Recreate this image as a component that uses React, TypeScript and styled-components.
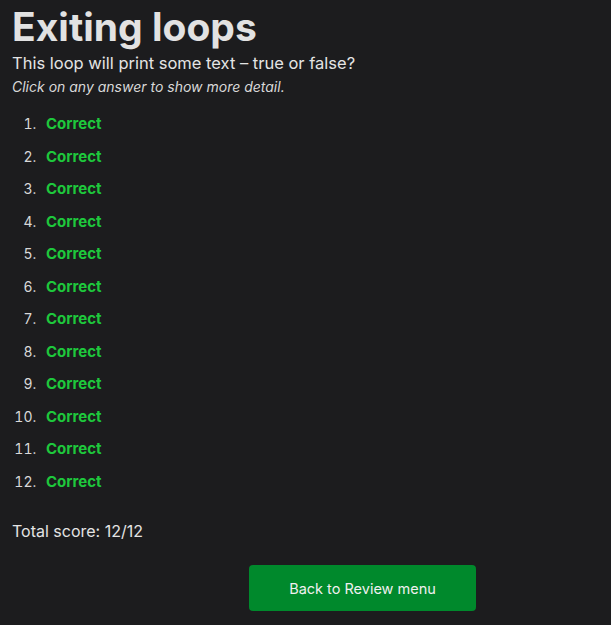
import styled, { createGlobalStyle } from 'styled-components';

const GlobalStyle = createGlobalStyle`
  html, body {
    margin: 0;
    padding: 0;
    background: #1c1c1e;
  }
  body {
    font-family: Inter, 'Noto Sans', 'Liberation Sans', sans-serif;
    color: #e4e4e4;
  }
`;

const Page = styled.div`
  display: flex;
  flex-direction: column;
  padding: 0 12px;
  min-height: 625px;
  box-sizing: border-box;
`;

const Title = styled.h1`
  margin: 5px 0 0;
  font-size: 39px;
  line-height: 44px;
  font-weight: 700;
  color: #e2e2e2;
`;

const Question = styled.p`
  margin: 3px 0 0;
  font-size: 16.5px;
  line-height: 22px;
`;

const Hint = styled.p`
  margin: 3px 0 0;
  font-size: 14px;
  line-height: 20px;
  font-style: italic;
  color: #d8d8d8;
`;

const Answers = styled.ol`
  margin: 11px 0 0;
  padding-left: 28px;
`;

const Answer = styled.li`
  font-size: 15px;
  line-height: 32.5px;
  padding-left: 6px;
  color: #d8d8d8;
  cursor: pointer;
  &::marker {
    font-size: 14px;
    font-weight: 400;
  }
`;

const Verdict = styled.span<{ correct: boolean }>`
  font-weight: 700;
  color: ${({ correct }) => (correct ? '#1ec83c' : '#e5484d')};
`;

const Score = styled.p`
  margin: 22px 0 0;
  font-size: 16px;
  line-height: 22px;
`;

const Footer = styled.div`
  display: flex;
  margin-top: 23px;
  padding-left: 237px;
`;

const BackButton = styled.button`
  width: 227px;
  height: 46px;
  border: none;
  border-radius: 4px;
  background: #00892c;
  color: #f0f0f0;
  font-family: inherit;
  font-size: 14.5px;
  cursor: pointer;
`;

const results = Array.from({ length: 12 }, () => true);

const App = () => {
  const score = results.filter(Boolean).length;

  return (
    <>
      <GlobalStyle />
      <Page>
        <Title>Exiting loops</Title>
        <Question>This loop will print some text – true or false?</Question>
        <Hint>Click on any answer to show more detail.</Hint>
        <Answers>
          {results.map((ok, i) => (
            <Answer key={i}>
              <Verdict correct={ok}>{ok ? 'Correct' : 'Incorrect'}</Verdict>
            </Answer>
          ))}
        </Answers>
        <Score>
          Total score: {score}/{results.length}
        </Score>
        <Footer>
          <BackButton>Back to Review menu</BackButton>
        </Footer>
      </Page>
    </>
  );
};

export default App;
